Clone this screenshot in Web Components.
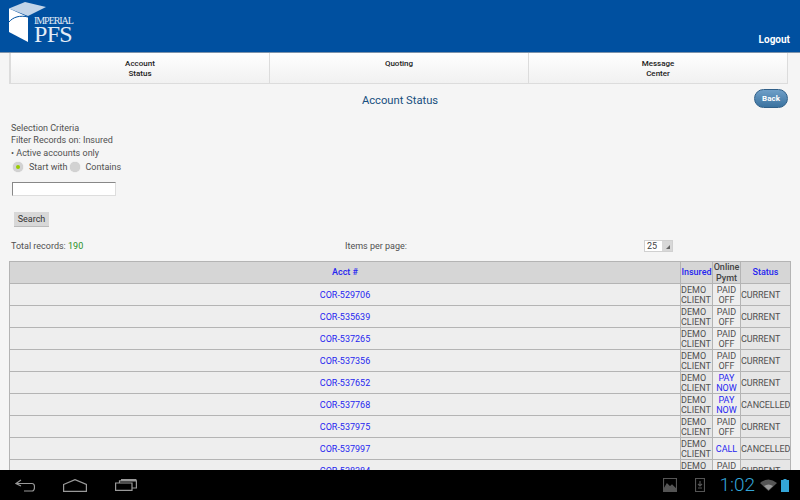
<!DOCTYPE html>
<html>
<head>
<meta charset="utf-8">
<title>Account Status</title>
<style>
  html, body { margin: 0; height: 100%; overflow: hidden; }
  body { display: flex; flex-direction: column; width: 800px; height: 500px; font-family: Roboto, sans-serif; background: #f5f5f5; color: #505050; }
  pfs-main { flex: 1; min-height: 0; overflow: hidden; }
</style>
</head>
<body>
<pfs-header></pfs-header>
<pfs-main>
  <pfs-tabs></pfs-tabs>
  <pfs-title>Account Status</pfs-title>
  <pfs-filter></pfs-filter>
  <pfs-pager></pfs-pager>
  <pfs-accounts></pfs-accounts>
</pfs-main>
<pfs-navbar></pfs-navbar>
<script>
  function shadow(el, html) {
    el.attachShadow({ mode: "open" }).innerHTML = html;
  }

  class PfsHeader extends HTMLElement {
    connectedCallback() {
      shadow(this, `
        <style>
          :host { display: flex; justify-content: space-between; height: 52px; background: #0050a0; color: #fff; padding: 0 10px 0 9px; box-shadow: 0 1px 0 #7d93ab; position: relative; }
          .logo { display: flex; padding-top: 2px; }
          svg { display: block; width: 38px; height: 41px; }
          .name { font-family: "Liberation Serif", serif; color: #e4ecf6; padding-top: 14px; margin-left: -13px; }
          .small { font-size: 10px; line-height: 10px; letter-spacing: -1.05px; }
          .big { font-size: 24px; line-height: 17px; letter-spacing: -.7px; }
          .logout { align-self: flex-end; font-size: 10px; font-weight: 700; line-height: 13px; padding-bottom: 6px; }
        </style>
        <div class="logo">
          <svg viewBox="0 0 38 41">
            <path d="M0 6.5 L16 0 L37 5 L19 14 Z" fill="#c2d4e8"/>
            <path d="M0 6.5 L19 15 V40 L0 30 Z" fill="#fff"/>
            <path d="M0 20 C4 15 11 13 19 15" fill="none" stroke="#0050a0" stroke-width="1"/>
          </svg>
          <div class="name"><div class="small">IMPERIAL</div><div class="big">PFS</div></div>
        </div>
        <span class="logout">Logout</span>
      `);
    }
  }

  class PfsTabs extends HTMLElement {
    connectedCallback() {
      shadow(this, `
        <style>
          :host { display: grid; grid-template-columns: 1fr 1fr 1fr; margin: 0 12px 0 9px; height: 32px; background: linear-gradient(#fff, #f1f1f1); border: 1px solid #dcdcdc; border-top: 0; box-sizing: border-box; font-size: 8px; font-weight: 500; color: #222; text-align: center; line-height: 9.5px; }
          div { padding-top: 7px; border-left: 1px solid #dcdcdc; }
          div:first-child { border-left: 0; }
        </style>
        <div>Account<br>Status</div>
        <div>Quoting</div>
        <div>Message<br>Center</div>
      `);
    }
  }

  class PfsTitle extends HTMLElement {
    connectedCallback() {
      shadow(this, `
        <style>
          :host { display: block; position: relative; height: 33px; text-align: center; font-size: 11.2px; line-height: 33px; color: #174f7f; }
          button { position: absolute; right: 12px; top: 5px; width: 34px; height: 19px; padding: 0; border: 1px solid #2f5f88; border-radius: 10px; background: linear-gradient(#6f9fc8, #3a729f); color: #fff; font: 700 8px Roboto, sans-serif; }
        </style>
        <slot></slot><button>Back</button>
      `);
    }
  }

  class PfsFilter extends HTMLElement {
    connectedCallback() {
      shadow(this, `
        <style>
          :host { display: block; padding: 4.6px 0 0 11px; font-size: 9px; line-height: 12.5px; color: #505050; height: 121px; box-sizing: border-box; }
          .radios { display: flex; align-items: center; height: 16px; padding-left: 2px; }
          .radio { width: 10px; height: 10px; border-radius: 50%; background: #d2d2d2; display: flex; align-items: center; justify-content: center; margin-right: 5px; box-shadow: 0 0 1px #bbb; }
          .radio.on { margin-right: 6px; }
          .radio.on::after { content: ""; width: 4px; height: 4px; border-radius: 50%; background: #9c0; }
          .radios span { margin-right: 3px; }
          input { display: block; width: 104px; height: 14px; box-sizing: border-box; margin: 7px 0 0 1px; border: 1px solid #ddd; border-top-color: #888; border-left-color: #888; background: #fff; padding: 0; }
          button { display: block; margin: 16px 0 0 3px; width: 35px; height: 14px; padding: 0; border: 0; background: #d8d8d8; box-shadow: 0 1px 0 #bbb; font: 9px Roboto, sans-serif; color: #333; }
        </style>
        <div>Selection Criteria</div>
        <div>Filter Records on: Insured</div>
        <div>• Active accounts only</div>
        <div class="radios"><i class="radio on"></i><span>Start with</span><i class="radio"></i><span>Contains</span></div>
        <input type="text">
        <button>Search</button>
      `);
    }
  }

  class PfsPager extends HTMLElement {
    connectedCallback() {
      shadow(this, `
        <style>
          :host { display: grid; grid-template-columns: 334px 299px auto; align-items: center; height: 15px; padding: 0 0 0 11px; font-size: 9px; color: #505050; margin-bottom: 8px; }
          b { font-weight: 400; color: #1f8f1f; }
          .select { width: 29px; height: 12px; box-sizing: border-box; border: 1px solid #d0d0d0; background: linear-gradient(to right, #fff 62%, #d8d8d8 62%); padding-left: 2px; line-height: 10px; position: relative; color: #444; }
          .select::after { content: ""; position: absolute; right: 2px; bottom: 2px; border: 2.5px solid transparent; border-right-color: #666; border-bottom-color: #666; }
        </style>
        <span>Total records: <b>190</b></span>
        <span>Items per page:</span>
        <div class="select">25</div>
      `);
    }
  }

  const ACCOUNTS = [
    ["COR-529706", "PAID OFF", "CURRENT"],
    ["COR-535639", "PAID OFF", "CURRENT"],
    ["COR-537265", "PAID OFF", "CURRENT"],
    ["COR-537356", "PAID OFF", "CURRENT"],
    ["COR-537652", "PAY NOW", "CURRENT"],
    ["COR-537768", "PAY NOW", "CANCELLED"],
    ["COR-537975", "PAID OFF", "CURRENT"],
    ["COR-537997", "CALL", "CANCELLED"],
    ["COR-538384", "PAID OFF", "CURRENT"],
  ];

  class PfsAccounts extends HTMLElement {
    connectedCallback() {
      const rows = ACCOUNTS.map(([acct, pay, status]) => `
        <tr>
          <td class="acct"><a>${acct}</a></td>
          <td class="ins">DEMO CLIENT</td>
          <td class="pay">${pay === "PAID OFF" ? pay : `<a>${pay}</a>`}</td>
          <td class="st">${status}</td>
        </tr>`).join("");
      shadow(this, `
        <style>
          :host { display: block; margin: 0 10px 0 9px; font-size: 9px; color: #505050; }
          table { border-collapse: collapse; table-layout: fixed; width: 781px; background: #eee; }
          th, td { border: 1px solid #b4b4b4; padding: 0; text-align: center; line-height: 10px; overflow: hidden; }
          th { height: 21px; line-height: 10.5px; background: #d6d6d6; font-weight: 500; color: #444; }
          td { height: 21px; }
          a { color: #2626f0; }
          td.ins, td.st { background: #e6e6e6; text-align: left; }
          td.st { white-space: nowrap; letter-spacing: -.05px; }
        </style>
        <table>
          <colgroup><col style="width:671px"><col style="width:32px"><col style="width:28px"><col style="width:50px"></colgroup>
          <tr><th><a>Acct #</a></th><th><a>Insured</a></th><th>Online Pymt</th><th><a>Status</a></th></tr>
          ${rows}
        </table>
      `);
    }
  }

  class PfsNavbar extends HTMLElement {
    connectedCallback() {
      shadow(this, `
        <style>
          :host { display: flex; align-items: center; flex: none; height: 30px; background: #000; position: relative; padding: 0 11px 0 15px; }
          svg { display: block; fill: none; stroke: #999; stroke-width: 1.2; }
          .keys { display: flex; gap: 28px; flex: 1; }
          .tray { display: flex; align-items: center; }
          .time { font-size: 19px; color: #33a5d8; line-height: 20px; margin: 0 5px 0 14px; font-weight: 300; }
        </style>
        <div class="keys">
          <svg width="20" height="13" viewBox="0 0 20 13"><path d="M6 1 L1 4.5 L6 7 M1 4.5 H17 Q19.5 4.5 19.5 8 Q19.5 12 17 12 H9"/></svg>
          <svg width="24" height="13" viewBox="0 0 24 13"><path d="M.6 5.5 L12 .6 L23.4 5.5 V12.4 H.6 Z"/></svg>
          <svg width="22" height="12" viewBox="0 0 22 12"><path d="M.6 4 H17 V11.4 H.6 Z M4.5 4 V1.8 H21.4 V9 H17 M6 .6 H21.4"/></svg>
        </div>
        <div class="tray">
          <svg width="14" height="14" viewBox="0 0 14 14" style="stroke:#555;margin-right:18px"><path d="M.5.5 H13.5 V13.5 H.5 Z"/><path d="M1 11 L4 6 L7 9 L9 7 L13 11 V13 H1 Z" fill="#555"/></svg>
          <svg width="10" height="14" viewBox="0 0 10 14" style="stroke:#555"><path d="M.5.5 H9.5 V13.5 H.5 Z M5 3 V8 M3 6 L5 8 L7 6 M3 10 H7"/></svg>
          <span class="time">1:02</span>
          <svg width="17" height="12" viewBox="0 0 17 12" style="stroke:none;margin-right:4px"><path d="M0 4 Q8.5 -3 17 4 L8.5 12 Z" fill="#555"/><path d="M4 7 Q8.5 4 13 7 L8.5 11 Z" fill="#999"/></svg>
          <svg width="8" height="13" viewBox="0 0 8 13" style="stroke:none"><path d="M2.5 0 H5.5 V1 H8 V13 H0 V1 H2.5 Z" fill="#33a5d8"/></svg>
        </div>
      `);
    }
  }

  customElements.define("pfs-header", PfsHeader);
  customElements.define("pfs-tabs", PfsTabs);
  customElements.define("pfs-title", PfsTitle);
  customElements.define("pfs-filter", PfsFilter);
  customElements.define("pfs-pager", PfsPager);
  customElements.define("pfs-accounts", PfsAccounts);
  customElements.define("pfs-navbar", PfsNavbar);
</script>
</body>
</html>
